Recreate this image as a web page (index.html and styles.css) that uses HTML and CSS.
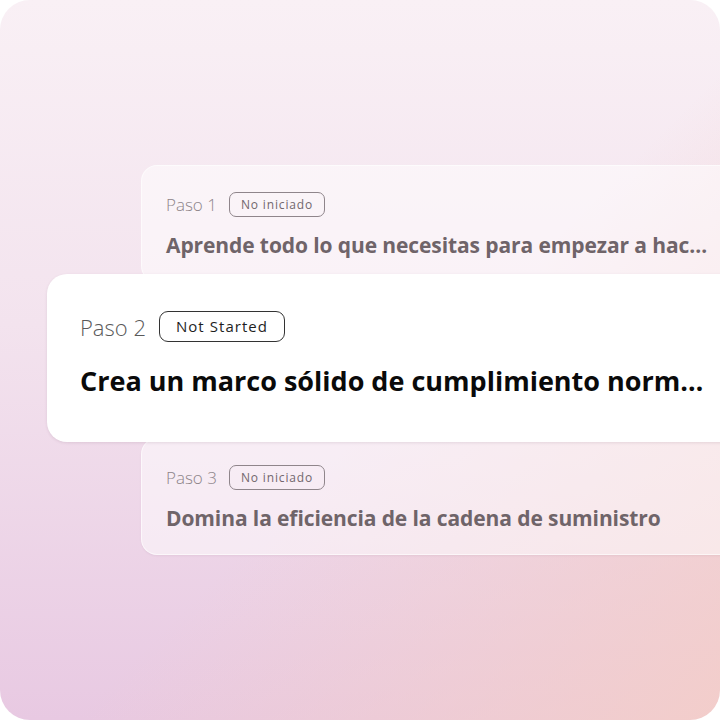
FILE: index.html
```html
<!DOCTYPE html>
<html lang="es">
<head>
  <meta charset="UTF-8">
  <meta name="viewport" content="width=device-width, initial-scale=1.0">
  <title>Pasos</title>
  <link rel="stylesheet" href="styles.css">
</head>
<body>
  <div class="frame">
    <div class="steps">
      <div class="step side first">
        <div class="meta">
          <span class="label">Paso 1</span>
          <span class="pill">No iniciado</span>
        </div>
        <div class="title">Aprende todo lo que necesitas para empezar a hac…</div>
      </div>

      <div class="step main">
        <div class="meta">
          <span class="label">Paso 2</span>
          <span class="pill">Not Started</span>
        </div>
        <div class="title">Crea un marco sólido de cumplimiento norm…</div>
      </div>

      <div class="step side last">
        <div class="meta">
          <span class="label">Paso 3</span>
          <span class="pill">No iniciado</span>
        </div>
        <div class="title">Domina la eficiencia de la cadena de suministro</div>
      </div>
    </div>
  </div>
</body>
</html>
```

FILE: styles.css
```css
body {
  margin: 0;
  background-color: #fff;
  font-family: "Open Sans", "Noto Sans", sans-serif;
}
.frame {
  width: 720px;
  height: 720px;
  border-radius: 30px;
  overflow: hidden;
  background:
    linear-gradient(135deg, rgba(255, 255, 255, 0) 55%, rgba(244, 206, 200, 0.9) 100%),
    linear-gradient(180deg, #f9f0f5 0%, #f3e3ee 45%, #e8c9e2 100%);
}
.steps {
  display: flex;
  flex-direction: column;
  padding-top: 165px;
}
.step {
  box-sizing: border-box;
  white-space: nowrap;
  overflow: hidden;
}
.side {
  margin-left: 141px;
  width: 620px;
  height: 117px;
  padding: 26px 53px 0 24px;
  border-radius: 16px;
  background-color: rgba(255, 255, 255, 0.5);
  border: 1px solid rgba(255, 255, 255, 0.6);
}
.side.last {
  margin-top: -4px;
  box-shadow: 0 1px 2px rgba(120, 80, 100, 0.08);
}
.main {
  position: relative;
  z-index: 1;
  margin-top: -8px;
  margin-left: 47px;
  width: 700px;
  height: 168px;
  padding: 37px 39px 0 33px;
  border-radius: 20px;
  background-color: #fff;
  box-shadow: 0 1px 3px rgba(90, 60, 80, 0.12);
}
.meta {
  display: flex;
  align-items: center;
}
.label {
  font-weight: 300;
}
.pill {
  box-sizing: border-box;
  border-style: solid;
  border-width: 1px;
  letter-spacing: 0.07em;
}
.title {
  font-weight: 700;
}

.side .meta { height: 25px; }
.side .label {
  font-size: 17px;
  color: #8d8489;
  margin-right: 12px;
}
.side .pill {
  height: 25px;
  line-height: 23px;
  padding: 0 11px;
  font-size: 12px;
  color: #72676d;
  border-color: #8f858b;
  border-radius: 7px;
}
.side .title {
  margin-top: 14px;
  font-size: 21px;
  line-height: 28px;
  color: #6f6469;
  letter-spacing: -0.1px;
}

.main .meta { height: 31px; }
.main .label {
  font-size: 22px;
  color: #595959;
  margin-right: 13px;
}
.main .pill {
  height: 31px;
  line-height: 29px;
  padding: 0 16px;
  font-size: 15px;
  color: #1e1e1e;
  border-color: #333;
  border-radius: 9px;
}
.main .title {
  margin-top: 21px;
  font-size: 27px;
  line-height: 36px;
  color: #0a0a0a;
}
```
